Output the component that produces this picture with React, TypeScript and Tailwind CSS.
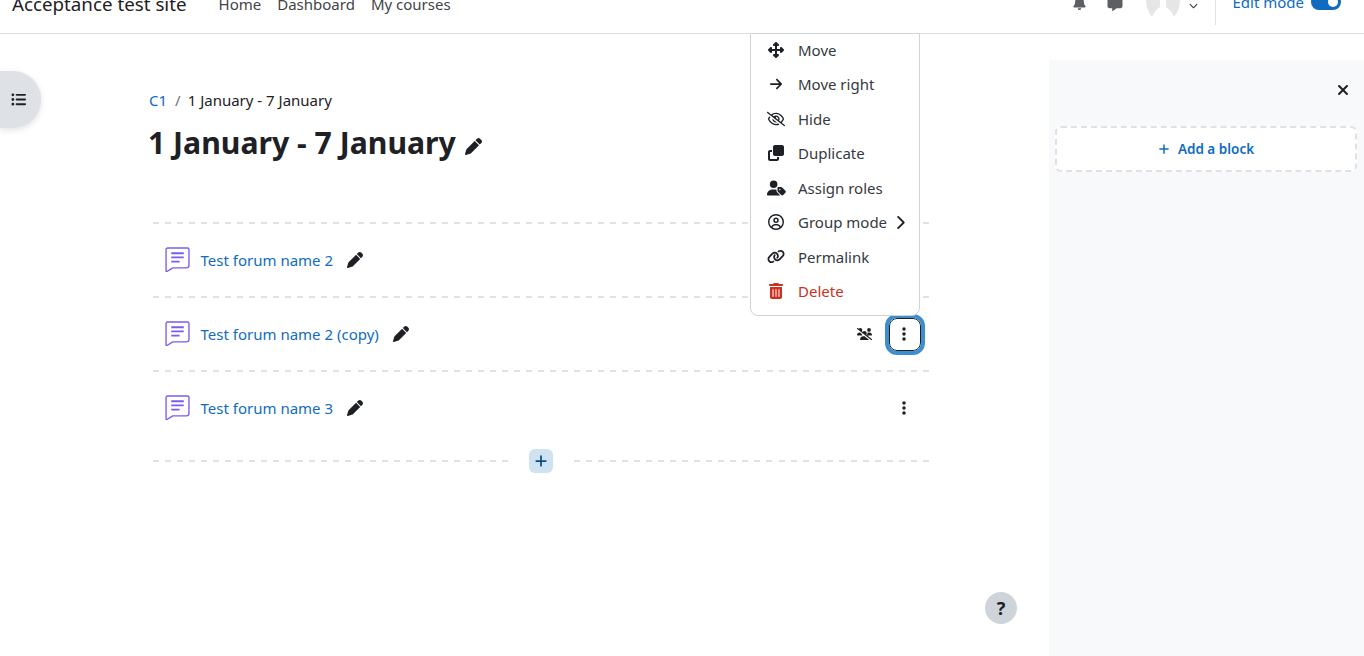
import React from 'react';
import {
  FaArrowRight,
  FaBell,
  FaChevronDown,
  FaChevronRight,
  FaClone,
  FaEllipsisVertical,
  FaLink,
  FaListUl,
  FaMessage,
  FaPen,
  FaPlus,
  FaRegCircleUser,
  FaRegEyeSlash,
  FaTrashCan,
  FaUpDownLeftRight,
  FaUserTag,
  FaUsersSlash,
  FaXmark,
} from 'react-icons/fa6';

const menuItems = [
  { icon: <FaUpDownLeftRight className="h-4 w-4" />, label: 'Move' },
  { icon: <FaArrowRight className="h-[14px] w-[14px]" />, label: 'Move right' },
  { icon: <FaRegEyeSlash className="h-[18px] w-[18px]" />, label: 'Hide' },
  { icon: <FaClone className="h-4 w-4" />, label: 'Duplicate' },
  { icon: <FaUserTag className="h-4 w-[19px]" />, label: 'Assign roles' },
  { icon: <FaRegCircleUser className="h-4 w-4" />, label: 'Group mode', chevron: true },
  { icon: <FaLink className="h-[17px] w-[18px]" />, label: 'Permalink' },
  { icon: <FaTrashCan className="h-4 w-[14px]" />, label: 'Delete', danger: true },
];

const activities = [
  { name: 'Test forum name 2' },
  { name: 'Test forum name 2 (copy)', focused: true },
  { name: 'Test forum name 3', kebab: true },
];

const ForumIcon = () => (
  <svg width="25" height="25" viewBox="0 0 24 24" fill="none" className="-mt-px shrink-0">
    <path
      d="M2.5 1h19A1.5 1.5 0 0 1 23 2.500v15a2.500 2.500 0 0 1-2.500 2.500H7.500l-5.700 3.500a.5.500 0 0 1-.8-.4V2.500A1.500 1.500 0 0 1 2.500 1Z"
      stroke="#7a5cf0"
      strokeWidth="1.300"
      strokeLinejoin="round"
    />
    <path d="M6 6h12M6 10h12M6 14h8" stroke="#7a5cf0" strokeWidth="1.700" />
  </svg>
);

const DashedLine = ({ className = '' }: { className?: string }) => (
  <div className={`h-0.5 bg-[repeating-linear-gradient(90deg,#dee2e6_0,#dee2e6_6px,transparent_6px,transparent_12.030px)] ${className}`} />
);

export default function App() {
  return (
    <div className="relative h-[656px] w-[1364px] overflow-hidden bg-white font-['Noto_Sans',sans-serif] text-[15px] text-[#1d2125]">
      {/* Top nav, page is scrolled a little so it is cut off */}
      <header className="flex h-[34px] items-start border-b border-[#dee2e6] pl-3 pr-[23px]">
        <div className="-mt-[10px] flex items-center">
          <span className="text-[18.750px] leading-[28px]">Acceptance test site</span>
          <nav className="ml-[32px] flex gap-4 leading-[22px] text-[#404448]">
            <span>Home</span>
            <span>Dashboard</span>
            <span>My courses</span>
          </nav>
        </div>
        <div className="ml-auto flex h-[25px] items-start">
          <FaBell className="-mt-[4px] h-[14px] w-[13px] text-[#5b5f63]" />
          <FaMessage className="-mt-[4px] ml-[21px] h-[15px] w-4 text-[#5b5f63]" />
          {/* avatar, only the lower half shows */}
          <svg width="36" height="18" viewBox="0 0 36 18" className="ml-[22px]">
            <path d="M1 0C1 6 3 12 7 17 9 12 12 9 15 7V0Z" fill="#e6e6e6" />
            <path d="M35 0C35 6 33 12 29 17 27 12 24 9 21 7V0Z" fill="#e6e6e6" />
          </svg>
          <FaChevronDown className="ml-[8px] mt-[1px] h-[9px] w-[9px] text-[#404448]" />
          <div className="ml-[17px] h-[25px] w-px bg-[#dee2e6]" />
          <span className="-mt-[9px] ml-4 leading-[22px] text-[#0f6cbf]">Edit mode</span>
          <div className="-mt-[6px] ml-[7px] flex h-4 w-[30px] items-center justify-end rounded-full bg-[#0f6cbf] pr-[3px]">
            <div className="h-[10px] w-[10px] rounded-full bg-white" />
          </div>
        </div>
      </header>

      <div className="flex h-[622px]">
        <main className="w-[1049px] shrink-0 pl-[149px]">
          <div className="mt-[56px] flex items-center leading-[21px]">
            <span className="text-[#0f6cbf]">C1</span>
            <span className="ml-[8px] mr-[7px] text-[#6a737b]">/</span>
            <span>1 January - 7 January</span>
          </div>
          <div className="mt-[11px] flex items-center">
            <h1 className="-ml-px text-[30.200px] font-bold leading-[42px]">1 January - 7 January</h1>
            <FaPen className="ml-[9px] mt-[7px] h-[17px] w-[17px]" />
          </div>

          <div className="ml-1 mt-[58px] w-[776px]">
            {activities.map((a) => (
              <div key={a.name}>
                <DashedLine />
                <div className="flex h-[72px] items-center pl-3 pr-[8px]">
                  <ForumIcon />
                  <span className="ml-[10.500px] text-[#0f6cbf]">{a.name}</span>
                  <FaPen className="ml-[14px] h-4 w-4" />
                  {a.focused && (
                    <div className="ml-auto flex items-center">
                      <FaUsersSlash className="h-[14px] w-[15px]" />
                      <div className="ml-[17px] mr-[0.500px] flex h-[33px] w-8 items-center justify-center rounded-lg border border-[#1d2125] pr-px outline-4 outline-[#3d8ed0]">
                        <FaEllipsisVertical className="h-4 w-4" />
                      </div>
                    </div>
                  )}
                  {a.kebab && <FaEllipsisVertical className="ml-auto mr-[9.500px] h-4 w-4" />}
                </div>
              </div>
            ))}
            <div className="mt-[5px] flex items-center">
              <DashedLine className="w-[356px]" />
              <div className="ml-5 flex h-6 w-6 items-center justify-center rounded-md bg-[#cfe2f2] text-[#0f4c86]">
                <FaPlus className="h-[14px] w-[14px]" />
              </div>
              <DashedLine className="ml-[21px] flex-1" />
            </div>
          </div>
        </main>

        <aside className="mt-[26px] flex-1 bg-[#f8f9fa] pl-[6px] pr-[7px]">
          <div className="flex h-[60px] items-center justify-end pr-[6px]">
            <FaXmark className="h-4 w-4" />
          </div>
          <div className="mt-[6px] flex h-[46px] items-center justify-center rounded-md border-2 border-dashed border-[#dee2e6] bg-white text-[13.500px] font-semibold text-[#0f6cbf]">
            <FaPlus className="mr-2 h-3 w-3" />
            Add a block
          </div>
        </aside>
      </div>

      {/* Course index toggle */}
      <div className="absolute left-0 top-[71px] flex h-[57px] w-[41px] items-center rounded-r-[28px] bg-[#dee2e6] pl-[11px] shadow-[0_2px_6px_rgba(0,0,0,0.12)]">
        <FaListUl className="h-[15px] w-[15px]" />
      </div>

      {/* Activity action menu */}
      <div className="absolute left-[750px] top-[33px] h-[283px] w-[170px] rounded-b-lg border border-[#ced4da] bg-white text-[#343a40]">
        {menuItems.map((item, i) => (
          <div
            key={item.label}
            className={`flex h-[34.500px] items-center ${i === 0 ? '-mt-[1.500px]' : ''} ${item.danger ? 'text-[#ca3120]' : ''}`}
          >
            <span className={`flex w-[47px] justify-center pl-[3px] ${item.danger ? '' : 'text-[#1d2125]'}`}>{item.icon}</span>
            <span>{item.label}</span>
            {item.chevron && <FaChevronRight className="ml-[8px] h-[15px] w-[10px] text-[#1d2125]" />}
          </div>
        ))}
      </div>

      {/* Help button */}
      <div className="absolute left-[985px] top-[592px] flex h-8 w-8 items-center justify-center rounded-full bg-[#ced4da] text-[18px] font-bold">
        ?
      </div>
    </div>
  );
}
